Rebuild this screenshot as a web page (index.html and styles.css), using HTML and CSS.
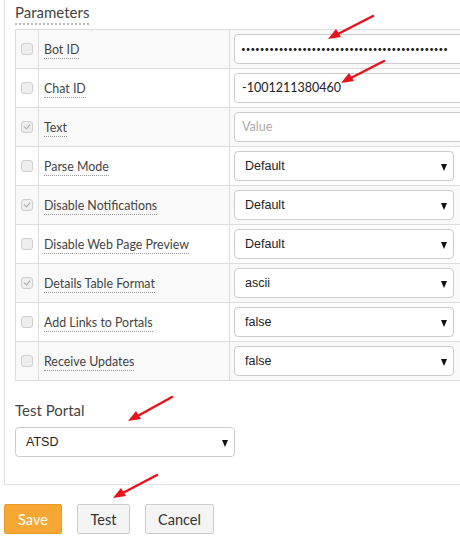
FILE: index.html
```html
<!DOCTYPE html>
<html>
<head>
<meta charset="utf-8">
<link rel="stylesheet" href="styles.css">
</head>
<body>
<div class="page">
  <div class="panel">
    <h3 class="title"><span class="dotted">Parameters</span></h3>
    <table class="params">
      <colgroup>
        <col class="c1">
        <col class="c2">
        <col class="c3">
      </colgroup>
      <tr>
        <td class="cb"><span class="box"></span></td>
        <td class="lbl"><span class="dotted">Bot ID</span></td>
        <td class="val"><div class="input pw"><span class="dots"><b>&bull;</b><b>&bull;</b><b>&bull;</b><b>&bull;</b><b>&bull;</b><b>&bull;</b><b>&bull;</b><b>&bull;</b><b>&bull;</b><b>&bull;</b><b>&bull;</b><b>&bull;</b><b>&bull;</b><b>&bull;</b><b>&bull;</b><b>&bull;</b><b>&bull;</b><b>&bull;</b><b>&bull;</b><b>&bull;</b><b>&bull;</b><b>&bull;</b><b>&bull;</b><b>&bull;</b><b>&bull;</b><b>&bull;</b><b>&bull;</b><b>&bull;</b><b>&bull;</b><b>&bull;</b><b>&bull;</b><b>&bull;</b><b>&bull;</b><b>&bull;</b><b>&bull;</b><b>&bull;</b><b>&bull;</b><b>&bull;</b><b>&bull;</b><b>&bull;</b><b>&bull;</b><b>&bull;</b><b>&bull;</b><b>&bull;</b></span></div></td>
      </tr>
      <tr>
        <td class="cb"><span class="box"></span></td>
        <td class="lbl"><span class="dotted">Chat ID</span></td>
        <td class="val"><div class="input">-1001211380460</div></td>
      </tr>
      <tr>
        <td class="cb"><span class="box checked"></span></td>
        <td class="lbl"><span class="dotted">Text</span></td>
        <td class="val"><div class="input ph">Value</div></td>
      </tr>
      <tr>
        <td class="cb"><span class="box"></span></td>
        <td class="lbl"><span class="dotted">Parse Mode</span></td>
        <td class="val"><div class="select">Default<span class="arrow"></span></div></td>
      </tr>
      <tr>
        <td class="cb"><span class="box checked"></span></td>
        <td class="lbl"><span class="dotted">Disable Notifications</span></td>
        <td class="val"><div class="select">Default<span class="arrow"></span></div></td>
      </tr>
      <tr>
        <td class="cb"><span class="box"></span></td>
        <td class="lbl"><span class="dotted">Disable Web Page Preview</span></td>
        <td class="val"><div class="select">Default<span class="arrow"></span></div></td>
      </tr>
      <tr>
        <td class="cb"><span class="box checked"></span></td>
        <td class="lbl"><span class="dotted">Details Table Format</span></td>
        <td class="val"><div class="select">ascii<span class="arrow"></span></div></td>
      </tr>
      <tr>
        <td class="cb"><span class="box"></span></td>
        <td class="lbl"><span class="dotted">Add Links to Portals</span></td>
        <td class="val"><div class="select">false<span class="arrow"></span></div></td>
      </tr>
      <tr>
        <td class="cb"><span class="box"></span></td>
        <td class="lbl"><span class="dotted">Receive Updates</span></td>
        <td class="val"><div class="select">false<span class="arrow"></span></div></td>
      </tr>
    </table>
    <div class="portal-label">Test Portal</div>
    <div class="select portal">ATSD<span class="arrow"></span></div>
  </div>
  <div class="buttons">
    <button class="btn save">Save</button>
    <button class="btn test">Test</button>
    <button class="btn cancel">Cancel</button>
  </div>
  <svg class="arrows" width="460" height="547" viewBox="0 0 460 547">
    <g stroke="#e8121b" stroke-width="2.5" fill="none" stroke-linecap="round">
      <line x1="373" y1="16" x2="334" y2="36"/>
      <line x1="384" y1="61" x2="347" y2="80"/>
      <line x1="172" y1="397" x2="134" y2="418"/>
      <line x1="157" y1="475" x2="119" y2="495"/>
    </g>
    <g fill="#e8121b">
      <polygon points="328,39 336,29 341,37"/>
      <polygon points="341,83 349,73 354,81"/>
      <polygon points="128,421 136,411 141,419"/>
      <polygon points="113,498 121,488 126,496"/>
    </g>
  </svg>
</div>
</body>
</html>
```

FILE: styles.css
```css
html, body {
  margin: 0;
  padding: 0;
  background: #fff;
  overflow: hidden;
}
body {
  font-family: "Lato", "Open Sans", sans-serif;
  color: #333;
  font-size: 12px;
}
.page {
  position: relative;
  width: 460px;
  height: 547px;
}
.panel {
  margin-left: 4px;
  width: 490px;
  border-left: 1px solid #e3e3e3;
  border-bottom: 1px solid #e3e3e3;
  padding: 3px 0 27px 10px;
}
.title {
  margin: 0;
  font-size: 15px;
  font-weight: normal;
  color: #444;
  line-height: 18px;
  height: 26px;
}
.dotted {
  border-bottom: 1px dotted #999;
}
.title .dotted {
  border-bottom: 2px dotted #bbb;
  padding-bottom: 2px;
}
.params {
  border-collapse: collapse;
  table-layout: fixed;
  width: 475px;
}
.c1 { width: 23px; }
.c2 { width: 191px; }
.params td {
  border: 1px solid #ddd;
  height: 38px;
  padding: 0;
  vertical-align: middle;
  white-space: nowrap;
}
.params tr:nth-child(odd) td {
  background: #f9f9f9;
}
.cb {
  text-align: center;
}
.box {
  display: inline-block;
  width: 10px;
  height: 10px;
  border: 1px solid #cfcfcf;
  border-radius: 3px;
  background: #eeeeee;
  vertical-align: middle;
  position: relative;
  top: -1px;
}
.box.checked::after {
  content: "";
  position: absolute;
  left: 3px;
  top: 1px;
  width: 3px;
  height: 5px;
  border-right: 1.5px solid #a8a8a8;
  border-bottom: 1.5px solid #a8a8a8;
  transform: rotate(40deg);
}
.lbl {
  padding-left: 5px !important;
  color: #444;
  font-size: 12.4px;
}
.lbl .dotted {
  padding-bottom: 1px;
}
.val {
  padding: 0 4px !important;
}
.input {
  box-sizing: border-box;
  height: 30px;
  border: 1px solid #ccc;
  border-radius: 4px;
  background: #fff;
  padding: 0 7px;
  line-height: 28px;
  font-size: 12.5px;
  color: #222;
  font-family: "Lato", sans-serif;
  overflow: hidden;
}
.input.pw {
  padding-left: 6px;
  display: flex;
  align-items: center;
}
.dots {
  display: flex;
  justify-content: space-between;
  width: 207px;
  font-size: 8px;
  line-height: 10px;
  color: #222;
}
.dots b {
  font-weight: normal;
}
.input.ph {
  color: #aaa;
}
.select {
  box-sizing: border-box;
  position: relative;
  width: 220px;
  height: 30px;
  border: 1px solid #ccc;
  border-radius: 4px;
  background: #fff;
  padding: 0 10px;
  line-height: 28px;
  font-size: 12.5px;
  color: #222;
  font-family: "Liberation Sans", Arial, sans-serif;
}
.arrow {
  position: absolute;
  right: 6px;
  top: 12px;
  width: 0;
  height: 0;
  border-left: 3.5px solid transparent;
  border-right: 3.5px solid transparent;
  border-top: 7px solid #111;
}
.portal-label {
  margin-top: 20px;
  font-size: 15px;
  color: #444;
  line-height: 18px;
}
.select.portal {
  margin-top: 8px;
}
.buttons {
  display: flex;
  gap: 15px;
  margin-top: 19px;
  margin-left: 4px;
}
.btn {
  box-sizing: border-box;
  height: 30px;
  border: 1px solid #ccc;
  border-radius: 2px;
  background: #f4f4f4;
  font-family: "Lato", "Open Sans", sans-serif;
  font-size: 14.5px;
  color: #333;
  padding: 0;
}
.btn.save {
  width: 58px;
  background: #f7a733;
  border-color: #e89a25;
  color: #fff;
}
.btn.test {
  width: 53px;
}
.btn.cancel {
  width: 69px;
}
.arrows {
  position: absolute;
  left: 0;
  top: 0;
  pointer-events: none;
}
```
